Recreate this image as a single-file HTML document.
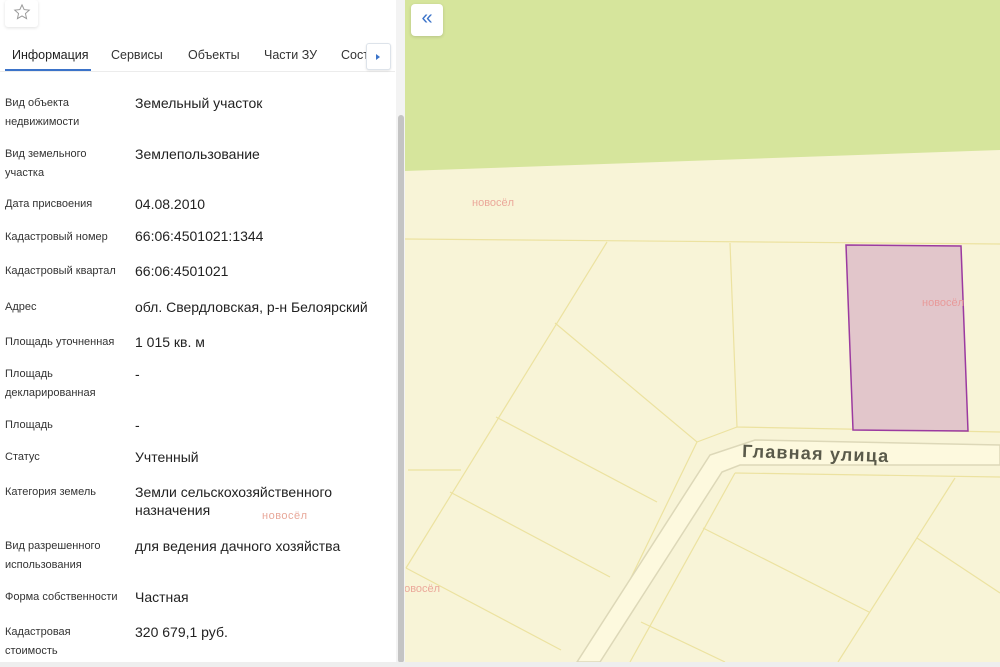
<!DOCTYPE html>
<html><head><meta charset="utf-8"><style>
*{margin:0;padding:0;box-sizing:border-box}
body{width:1000px;height:667px;overflow:hidden;background:#fff;font-family:"Liberation Sans","Noto Sans CJK SC",sans-serif;position:relative}
.l{position:absolute;left:5px;font-size:11px;color:#333;line-height:19px}
.v{position:absolute;left:135px;font-size:14px;color:#222;line-height:18px}
.t{position:absolute;top:48px;font-size:12.5px;color:#333}
.wm{position:absolute;color:#e8a89a;font-size:12px;letter-spacing:.5px}
</style></head><body>
<div style="position:absolute;left:5px;top:0;width:33px;height:27px;border-radius:3px;box-shadow:0 1px 3px rgba(0,0,0,.12);background:#fff"></div>
<svg style="position:absolute;left:13px;top:3px" width="18" height="18" viewBox="0 0 24 24"><path d="M12 2.5l2.9 6.3 6.8.7-5.1 4.6 1.5 6.7L12 17.3l-6.1 3.5 1.5-6.7-5.1-4.6 6.8-.7z" fill="none" stroke="#999" stroke-width="1.3"/></svg>
<div class="t" style="left:12px;color:#222">Информация</div>
<div class="t" style="left:111px">Сервисы</div>
<div class="t" style="left:188px">Объекты</div>
<div class="t" style="left:264px">Части ЗУ</div>
<div class="t" style="left:341px">Сост</div>
<div style="position:absolute;left:5px;top:69px;width:86px;height:2px;background:#3b73c9"></div>
<div style="position:absolute;left:0;top:71px;width:395px;height:1px;background:#ececec"></div>
<div style="position:absolute;left:366px;top:43px;width:25px;height:27px;background:#fff;border:1px solid #dde3ea;border-radius:3px;box-shadow:0 1px 2px rgba(0,0,0,.1)"></div>
<div style="position:absolute;left:376px;top:54px;width:0;height:0;border-left:4px solid #3b73c9;border-top:3.5px solid transparent;border-bottom:3.5px solid transparent"></div>

<div class="l" style="top:94px">Вид объекта<br>недвижимости</div><div class="v" style="top:94px">Земельный участок</div>
<div class="l" style="top:145px">Вид земельного<br>участка</div><div class="v" style="top:145px">Землепользование</div>
<div class="l" style="top:195px">Дата присвоения</div><div class="v" style="top:195px">04.08.2010</div>
<div class="l" style="top:228px">Кадастровый номер</div><div class="v" style="top:227px">66:06:4501021:1344</div>
<div class="l" style="top:262px">Кадастровый квартал</div><div class="v" style="top:262px">66:06:4501021</div>
<div class="l" style="top:298px">Адрес</div><div class="v" style="top:298px">обл. Свердловская, р-н Белоярский</div>
<div class="l" style="top:333px">Площадь уточненная</div><div class="v" style="top:333px">1 015 кв. м</div>
<div class="l" style="top:365px">Площадь<br>декларированная</div><div class="v" style="top:365px">-</div>
<div class="l" style="top:416px">Площадь</div><div class="v" style="top:416px">-</div>
<div class="l" style="top:448px">Статус</div><div class="v" style="top:448px">Учтенный</div>
<div class="l" style="top:483px">Категория земель</div><div class="v" style="top:483px">Земли сельскохозяйственного<br>назначения</div>
<div class="l" style="top:537px">Вид разрешенного<br>использования</div><div class="v" style="top:537px">для ведения дачного хозяйства</div>
<div class="l" style="top:588px">Форма собственности</div><div class="v" style="top:588px">Частная</div>
<div class="l" style="top:623px">Кадастровая<br>стоимость</div><div class="v" style="top:623px">320 679,1 руб.</div>
<div class="wm" style="left:262px;top:510px;font-size:11px">новосёл</div>

<div style="position:absolute;left:396px;top:0;width:9px;height:667px;background:#f3f3f3"></div>
<div style="position:absolute;left:398px;top:115px;width:6px;height:548px;background:#c4c4c4;border-radius:3px"></div>
<div style="position:absolute;left:0;top:662px;width:1000px;height:5px;background:#eeeeee"></div>

<svg style="position:absolute;left:405px;top:0" width="595" height="662" viewBox="405 0 595 662">
<rect x="405" y="0" width="595" height="662" fill="#f8f4d7"/>
<polygon points="405,0 1000,0 1000,150 405,171" fill="#d6e59c"/>
<g stroke="#ece2a0" stroke-width="1.2" fill="none">
<polyline points="405,239 1000,244"/>
<polyline points="730,243 737,427 1000,432"/>
<polyline points="607,242 406,568"/>
<polyline points="555,323 697,442 737,427"/>
<polyline points="496,417 657,502"/>
<polyline points="450,492 610,577"/>
<polyline points="406,568 561,650"/>
<polyline points="408,470 461,470"/>
<polyline points="697,442 590,662"/>
<polyline points="735,473 1000,477"/>
<polyline points="735,473 630,662"/>
<polyline points="703,528 869,612"/>
<polyline points="955,478 838,662"/>
<polyline points="917,538 1000,593"/>
<polyline points="641,622 725,662"/>
</g>
<polygon points="577,662 710,455 755,440 1000,445 1000,465 740,465 722,472 600,662" fill="#fdf9de" stroke="#ddd8b8" stroke-width="1.5"/>
<text x="742" y="457" font-family="Liberation Sans,sans-serif" font-size="18" font-weight="bold" fill="#5a5a4a" transform="rotate(2 742 456)" letter-spacing="1.2">Главная  улица</text>
<polygon points="846,245 961,246 968,431 853,430" fill="#e2c6cb" stroke="#9b3aa0" stroke-width="1.5"/>
<text x="472" y="206" font-size="11" fill="#eba89a" font-family="Liberation Sans,sans-serif">новосёл</text>
<text x="922" y="306" font-size="11" fill="#e89a9a" font-family="Liberation Sans,sans-serif">новосёл</text>
<text x="398" y="592" font-size="11" fill="#eba89a" font-family="Liberation Sans,sans-serif">новосёл</text>
</svg>
<div style="position:absolute;left:411px;top:4px;width:32px;height:32px;background:#fff;border-radius:4px;box-shadow:0 1px 3px rgba(0,0,0,.15);color:#3b73c9;font-size:20px;text-align:center;line-height:28px">«</div>
</body></html>
